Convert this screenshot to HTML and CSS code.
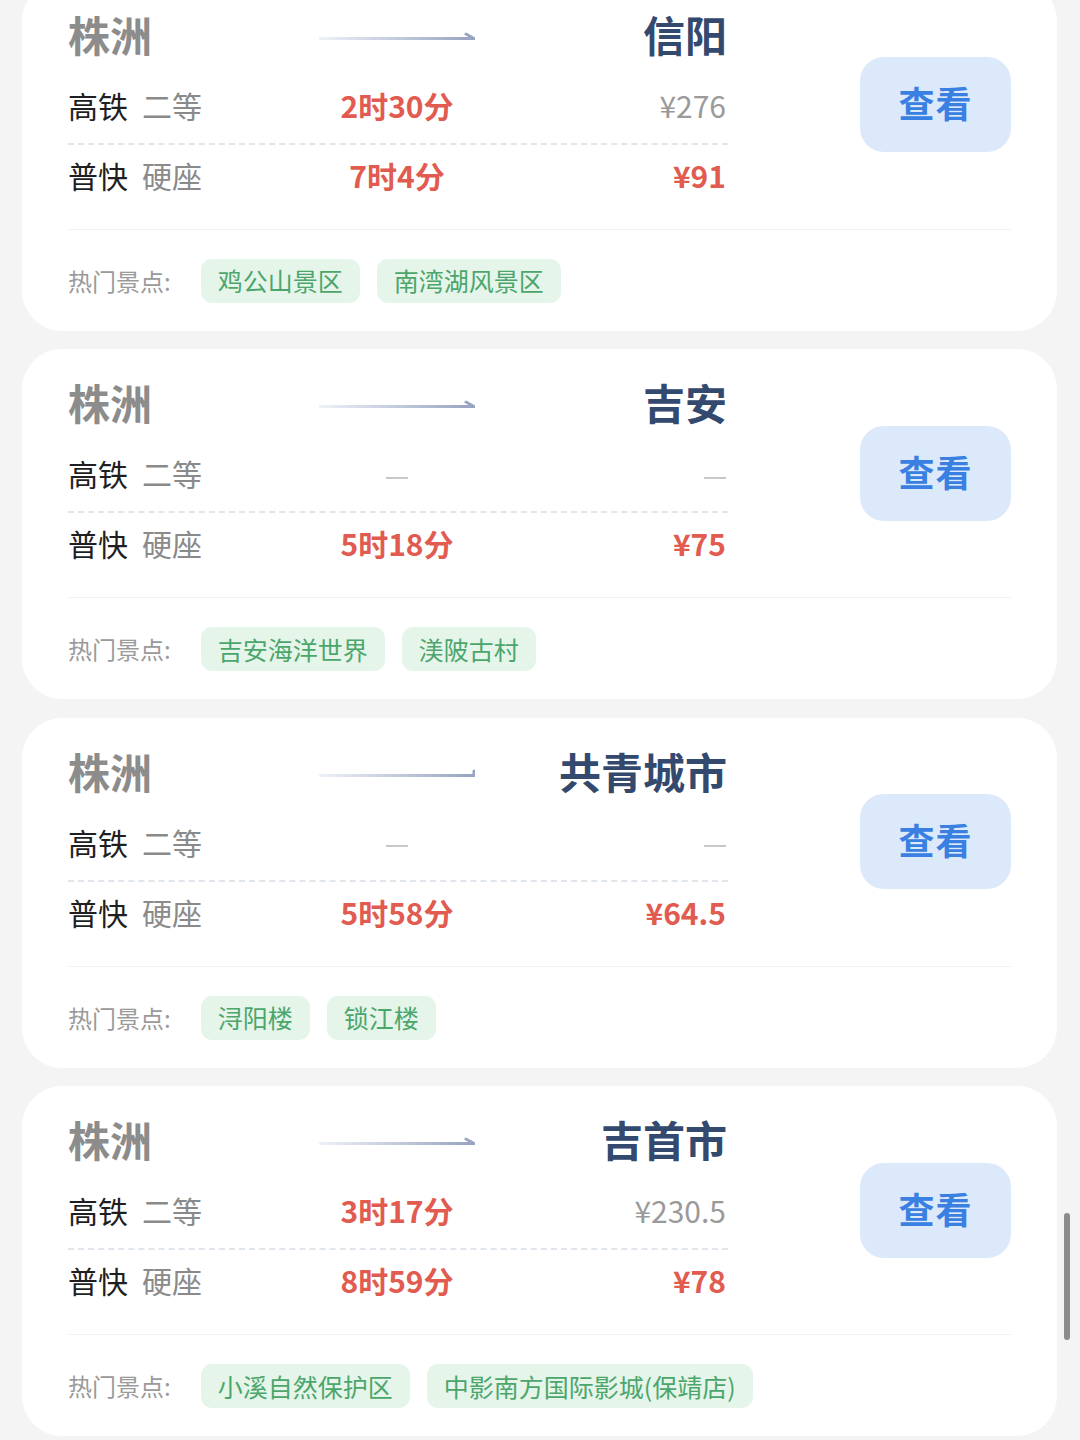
FILE: index.html
```html
<!DOCTYPE html>
<html lang="zh-CN">
<head>
<meta charset="utf-8">
<title>株洲出发</title>
<link rel="stylesheet" href="styles.css">
</head>
<body>
<div class="list">

  <div class="card">
    <div class="top">
      <div class="info">
        <div class="grid title-row">
          <div class="from">株洲</div>
          <div class="arrow"><svg width="156" height="10" viewBox="0 0 156 10"><defs><linearGradient id="g1" x1="0" x2="1" y1="0" y2="0"><stop offset="0" stop-color="#eef1f7"/><stop offset="1" stop-color="#97a3c0"/></linearGradient></defs><path d="M0 7.5 H155 L147 3" fill="none" stroke="url(#g1)" stroke-width="3" stroke-linejoin="round" stroke-linecap="round"/></svg></div>
          <div class="to">信阳</div>
        </div>
        <div class="grid row dashed">
          <div class="type">高铁<span class="seat">二等</span></div>
          <div class="time">2时30分</div>
          <div class="price">¥276</div>
        </div>
        <div class="grid row">
          <div class="type">普快<span class="seat">硬座</span></div>
          <div class="time">7时4分</div>
          <div class="price hot">¥91</div>
        </div>
      </div>
      <div class="btn">查看</div>
    </div>
    <div class="spots">
      <span class="label">热门景点:</span>
      <span class="tag">鸡公山景区</span>
      <span class="tag">南湾湖风景区</span>
    </div>
  </div>

  <div class="card">
    <div class="top">
      <div class="info">
        <div class="grid title-row">
          <div class="from">株洲</div>
          <div class="arrow"><svg width="156" height="10" viewBox="0 0 156 10"><defs><linearGradient id="g2" x1="0" x2="1" y1="0" y2="0"><stop offset="0" stop-color="#eef1f7"/><stop offset="1" stop-color="#97a3c0"/></linearGradient></defs><path d="M0 7.5 H155 L147 3" fill="none" stroke="url(#g2)" stroke-width="3" stroke-linejoin="round" stroke-linecap="round"/></svg></div>
          <div class="to">吉安</div>
        </div>
        <div class="grid row dashed">
          <div class="type">高铁<span class="seat">二等</span></div>
          <div class="time"><span class="none"></span></div>
          <div class="price"><span class="none"></span></div>
        </div>
        <div class="grid row">
          <div class="type">普快<span class="seat">硬座</span></div>
          <div class="time">5时18分</div>
          <div class="price hot">¥75</div>
        </div>
      </div>
      <div class="btn">查看</div>
    </div>
    <div class="spots">
      <span class="label">热门景点:</span>
      <span class="tag">吉安海洋世界</span>
      <span class="tag">渼陂古村</span>
    </div>
  </div>

  <div class="card">
    <div class="top">
      <div class="info">
        <div class="grid title-row">
          <div class="from">株洲</div>
          <div class="arrow"><svg width="156" height="10" viewBox="0 0 156 10"><defs><linearGradient id="g3" x1="0" x2="1" y1="0" y2="0"><stop offset="0" stop-color="#eef1f7"/><stop offset="1" stop-color="#97a3c0"/></linearGradient></defs><path d="M0 7.5 H155 L155 3" fill="none" stroke="url(#g3)" stroke-width="3" stroke-linejoin="round" stroke-linecap="round"/></svg></div>
          <div class="to">共青城市</div>
        </div>
        <div class="grid row dashed">
          <div class="type">高铁<span class="seat">二等</span></div>
          <div class="time"><span class="none"></span></div>
          <div class="price"><span class="none"></span></div>
        </div>
        <div class="grid row">
          <div class="type">普快<span class="seat">硬座</span></div>
          <div class="time">5时58分</div>
          <div class="price hot">¥64.5</div>
        </div>
      </div>
      <div class="btn">查看</div>
    </div>
    <div class="spots">
      <span class="label">热门景点:</span>
      <span class="tag">浔阳楼</span>
      <span class="tag">锁江楼</span>
    </div>
  </div>

  <div class="card">
    <div class="top">
      <div class="info">
        <div class="grid title-row">
          <div class="from">株洲</div>
          <div class="arrow"><svg width="156" height="10" viewBox="0 0 156 10"><defs><linearGradient id="g4" x1="0" x2="1" y1="0" y2="0"><stop offset="0" stop-color="#eef1f7"/><stop offset="1" stop-color="#97a3c0"/></linearGradient></defs><path d="M0 7.5 H155 L147 3" fill="none" stroke="url(#g4)" stroke-width="3" stroke-linejoin="round" stroke-linecap="round"/></svg></div>
          <div class="to">吉首市</div>
        </div>
        <div class="grid row dashed">
          <div class="type">高铁<span class="seat">二等</span></div>
          <div class="time">3时17分</div>
          <div class="price">¥230.5</div>
        </div>
        <div class="grid row">
          <div class="type">普快<span class="seat">硬座</span></div>
          <div class="time">8时59分</div>
          <div class="price hot">¥78</div>
        </div>
      </div>
      <div class="btn">查看</div>
    </div>
    <div class="spots">
      <span class="label">热门景点:</span>
      <span class="tag">小溪自然保护区</span>
      <span class="tag">中影南方国际影城(保靖店)</span>
    </div>
  </div>

</div>
<div class="scrollbar"></div>
</body>
</html>
```

FILE: styles.css
```css
html, body {
  margin: 0;
  padding: 0;
}
body {
  background: #f4f4f4;
  font-family: "Noto Sans CJK SC", "Noto Sans", sans-serif;
  width: 1080px;
  height: 1440px;
  overflow: hidden;
  position: relative;
}
.list {
  display: flex;
  flex-direction: column;
  gap: 18.5px;
  padding: 0 23px 0 22px;
  margin-top: -19.5px;
}
.card {
  background: #ffffff;
  border-radius: 40px;
  height: 350px;
  box-sizing: border-box;
  padding: 20px 46px 0 46px;
}
.top {
  display: flex;
  align-items: center;
}
.info {
  width: 660px;
}
.btn {
  margin-left: auto;
  margin-top: 4px;
  width: 151px;
  height: 95px;
  box-sizing: border-box;
  padding-bottom: 5px;
  border-radius: 24px;
  background: #dbe9fb;
  color: #3a7fe2;
  font-size: 36px;
  font-weight: 700;
  display: flex;
  align-items: center;
  justify-content: center;
  letter-spacing: 1px;
}
.grid {
  display: grid;
  grid-template-columns: 230px 198px 232px;
  align-items: center;
}
.title-row {
  height: 66px;
}
.from {
  font-size: 42px;
  font-weight: 700;
  color: #8c8c8c;
  line-height: 1;
}
.arrow {
  display: flex;
  justify-content: center;
  padding-top: 4px;
}
.arrow svg {
  display: block;
}
.to {
  font-size: 42px;
  font-weight: 700;
  color: #34496e;
  text-align: right;
  line-height: 1;
  margin-right: 1px;
}
.row {
  height: 60px;
}
.row.dashed {
  height: 78px;
  box-sizing: border-box;
  border-bottom: 2px dashed #e1e6ed;
}
.type {
  font-size: 30px;
  color: #1f1f1f;
  line-height: 1;
  white-space: nowrap;
}
.seat {
  color: #8a8a8a;
  margin-left: 14px;
}
.time {
  font-size: 30px;
  font-weight: 700;
  color: #e15b50;
  text-align: center;
  line-height: 1;
}
.price {
  font-size: 30px;
  color: #9a9a9a;
  text-align: right;
  line-height: 1;
  margin-right: 2px;
}
.price.hot {
  color: #e15b50;
  font-weight: 700;
}
.none {
  display: inline-block;
  width: 22px;
  height: 2px;
  background: #c8c8c8;
  vertical-align: middle;
}
.spots {
  margin-top: 24px;
  border-top: 1px solid #f1f1f1;
  padding-top: 29px;
  display: flex;
  align-items: center;
  gap: 17px;
}
.label {
  font-size: 24px;
  color: #9a9a9a;
  margin-right: 13px;
  line-height: 1;
}
.tag {
  height: 44px;
  padding: 0 17px;
  border-radius: 11px;
  background: #e5f5ea;
  color: #4ca66c;
  font-size: 25px;
  display: flex;
  align-items: center;
  line-height: 1;
}
.scrollbar {
  position: absolute;
  left: 1064px;
  top: 1213px;
  width: 6px;
  height: 127px;
  border-radius: 3px;
  background: #8c8c8c;
}
```
